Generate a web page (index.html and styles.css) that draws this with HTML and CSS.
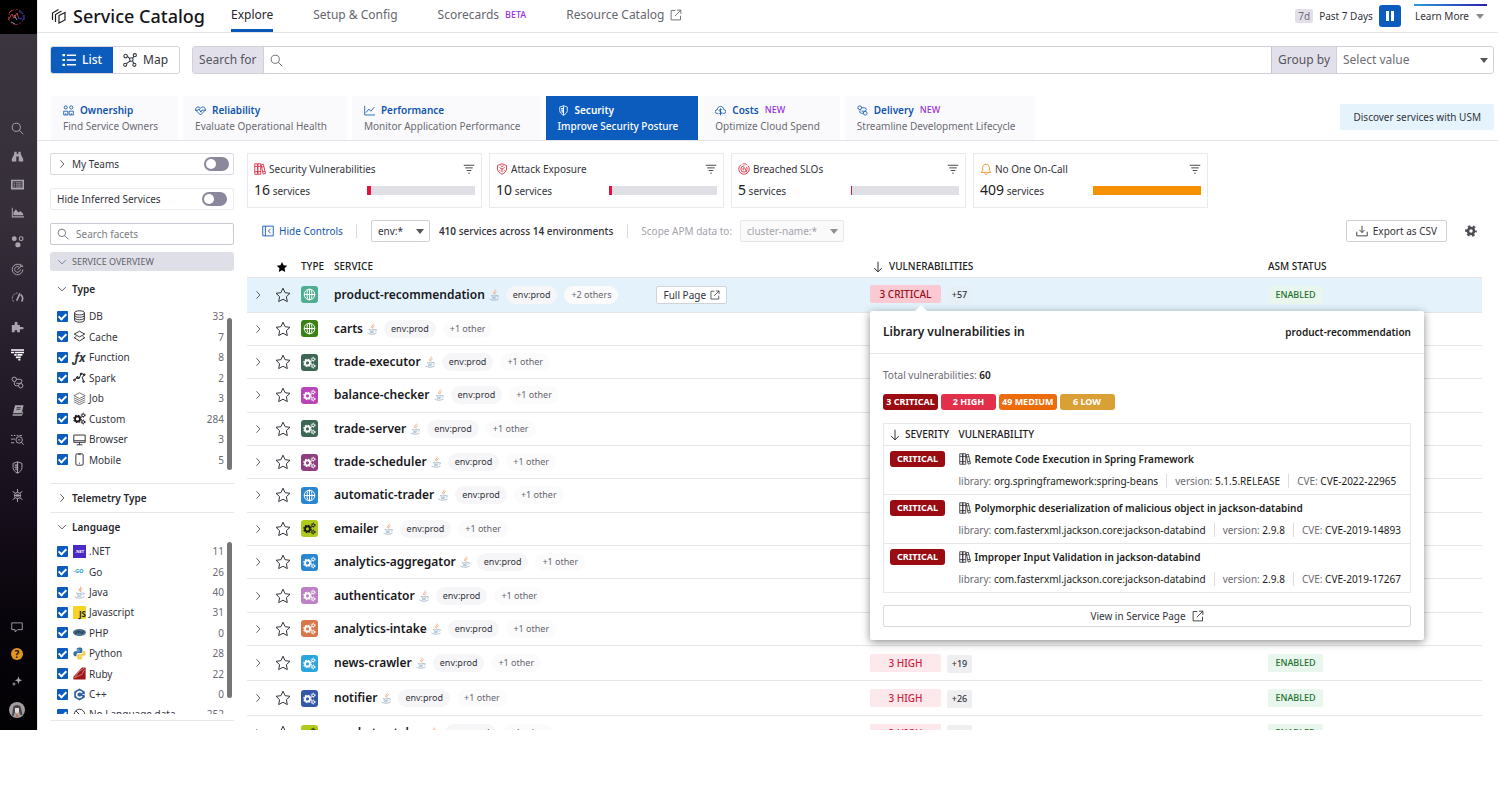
FILE: index.html
```html
<!doctype html>
<html lang="en">
<head>
	<meta charset="UTF-8">
	<title>Service Catalog</title>
	<link rel="stylesheet" href="styles.css">
</head>
<body>
	<!-- icon sprite -->
	<svg class="sprite" width="0" height="0" aria-hidden="true">
		<symbol id="i-search" viewBox="0 0 16 16"><circle cx="6.5" cy="6.5" r="5"/><path d="M10.2 10.2L15 15"/></symbol>
		<symbol id="i-right" viewBox="0 0 16 16"><path d="M5.5 2l5.5 6-5.5 6"/></symbol>
		<symbol id="i-down" viewBox="0 0 16 16"><path d="M2 5l6 6 6-6"/></symbol>
		<symbol id="i-star" viewBox="0 0 16 16"><path d="M8 1.2l2.1 4.5 4.9.6-3.6 3.4.9 4.9L8 12.2l-4.3 2.4.9-4.9L1 6.3l4.9-.6z"/></symbol>
		<symbol id="i-ext" viewBox="0 0 16 16"><path d="M7 2H1.5v12.500H14V9M9.500 1.500h5v5M14.500 1.500L6.500 9.500"/></symbol>
		<symbol id="i-filter" viewBox="0 0 16 16"><path d="M1 3h14M3 6.500h10M5 10h6M7 13.500h2"/></symbol>
		<symbol id="i-arrow" viewBox="0 0 16 16"><path d="M8 1v13.500M3 9.500l5 5 5-5"/></symbol>
		<symbol id="i-globe" viewBox="0 0 16 16"><circle cx="8" cy="8" r="6.500"/><ellipse cx="8" cy="8" rx="3" ry="6.500"/><path d="M8 1.500v13M1.500 8h13"/></symbol>
		<symbol id="i-gears" viewBox="0 0 16 16">
			<circle cx="5.500" cy="8.500" r="3" stroke-width="2.200"/><circle cx="5.500" cy="8.500" r="4.500" stroke-width="1.600" stroke-dasharray="2 1.534"/>
			<circle cx="12.500" cy="4" r="1.700" stroke-width="1.200"/><circle cx="12.500" cy="4" r="2.600" stroke-width=".9" stroke-dasharray="1.300 1.420"/>
			<circle cx="12.500" cy="12.300" r="1.700" stroke-width="1.200"/><circle cx="12.500" cy="12.300" r="2.600" stroke-width=".9" stroke-dasharray="1.300 1.420"/>
		</symbol>
		<symbol id="i-java" viewBox="0 0 16 16">
			<path d="M9.500.8c1.500 2-3.500 3.200-1.800 5.700M11.500 3.500C8.500 4.500 8.800 6 9.500 7.500" stroke="#f0a878" stroke-width="1.300"/>
			<path d="M4 8.500c2 .9 6 .9 8 0M4.800 10.500c2 .9 4.500.9 6.200 0M5.200 12.300c1.500.7 3.500.7 5 0M2 13.300c2.500 2.200 9.500 2.200 12 0M12.300 8.700c2.500-.5 2.200 2-.3 2.300" stroke="#9cb3c6" stroke-width="1.100"/>
		</symbol>
		<symbol id="i-books" viewBox="0 0 16 16"><path d="M1 1h4v14H1zM5 1h4v14H5zM1 4.500h8M1 11.500h8M9.500 2.500l3-.8L15.300 14l-3 .8zM10.300 5.500l3-.7M11.700 11.700l3-.7"/></symbol>
		<symbol id="i-shield" viewBox="0 0 16 16"><path d="M8 1l5.500 2v5c0 3-2.500 5.500-5.500 7-3-1.500-5.500-4-5.500-7V3zM8 1v14"/><path d="M8 3v10M4.500 5H8M4.500 7.500H8M5 10h3" stroke-width="1.600"/></symbol>
		<symbol id="i-link" viewBox="0 0 16 16"><circle cx="4" cy="4" r="2.700"/><circle cx="12" cy="12" r="2.700"/><path d="M6.700 4H11a2.500 2.500 0 0 1 0 5H6.500M9.300 12H6.500a2.500 2.500 0 0 1-1-4.800"/></symbol>
	</svg>

	<div class="app">
		<nav class="rail">
			<a href="#" class="logo" aria-label="Home">
				<svg viewBox="0 0 20 18"><circle cx="10" cy="9" r="7.500" stroke="#7a2826" stroke-dasharray="5 1.500 2 1"/><path d="M3 5l3-3M2 12l4-6 2 4 3-5 2 6" stroke="#c23a34"/><path d="M13 3l4 3M18 7v5M12 10l4 1" stroke="#2a2a9c" stroke-width="1.500"/><path d="M5 14l4 2M8 7l3 5" stroke="#8d9090"/></svg>
			</a>
			<ul class="rail_main">
				<li><a href="#" aria-label="Search"><svg class="ln"><use href="#i-search"/></svg></a></li>
				<li><a href="#" aria-label="Watchdog"><svg viewBox="0 0 16 16" class="fl"><path d="M4 2h3v3h2V2h3v3l3 6v3H9.500V8h-3v6H1v-3l3-6z"/></svg></a></li>
				<li><a href="#" aria-label="Dashboards"><svg viewBox="0 0 16 16" class="ln"><path d="M1 3h14v10H1z" stroke-width="2"/><path d="M3 6h2M6 6h7M3 8.500h2M6 8.500h7M3 11h2M6 11h7"/></svg></a></li>
				<li><a href="#" aria-label="Metrics"><svg viewBox="0 0 16 16" class="fl"><path d="M1 2h1.200v10.500H16V14H1zM3 11.500V8l3-4 3 4 2.500-2L15 9.500v2z"/></svg></a></li>
				<li><a href="#" aria-label="Infrastructure"><svg viewBox="0 0 16 16" class="fl"><circle cx="4" cy="4.500" r="3"/><circle cx="8.500" cy="12" r="3.200"/><circle cx="12.500" cy="4.500" r="2.300" fill="none" stroke="#a9a5ad" stroke-width="1.400"/></svg></a></li>
				<li><a href="#" aria-label="Monitors"><svg viewBox="0 0 16 16" class="ln"><path d="M11.500 2.500A6.500 6.500 0 1 0 14.500 8"/><path d="M10 5a3.500 3.500 0 1 0 1.500 3M8 8l6-5M12 1v3h3"/></svg></a></li>
				<li><a href="#" aria-label="Performance"><svg viewBox="0 0 16 16" class="ln"><path d="M3 13A6.500 6.500 0 0 1 8 2.500" stroke-dasharray="2.500 1.500"/><path d="M12 4.500a6.500 6.500 0 0 1 1 8.500M11 3L7 12" stroke-width="2"/></svg></a></li>
				<li><a href="#" aria-label="Integrations"><svg viewBox="0 0 16 16" class="fl"><path d="M1 6h3.500V3.500a1.800 1.800 0 0 1 3.500 0V6h3v2.500h3a1.500 1.500 0 0 1 0 3h-3V15H7.500v-2.500h-3V15H1z"/></svg></a></li>
				<li class="on"><a href="#" aria-label="Service Catalog"><svg viewBox="0 0 16 16" class="ln"><path d="M0 2.500h16M0 5.500h4M5 5.500h11M4 8.500h3M8 8.500h6M6 11.500h6M9 14.500h2.500" stroke-width="2"/></svg></a></li>
				<li><a href="#" aria-label="Delivery"><svg class="ln"><use href="#i-link"/></svg></a></li>
				<li><a href="#" aria-label="Notebooks"><svg viewBox="0 0 16 16" class="fl"><path d="M5 1.500h10.500l-2.500 10H2.500zM2 12.500h11l1.500-4 .5 1.500-1.500 4.500H2z"/><path d="M7 4.500h5M6.500 6.500h5" stroke="#241c28"/></svg></a></li>
				<li><a href="#" aria-label="Logs"><svg viewBox="0 0 16 16" class="ln"><path d="M0 3h2M3.500 3h2M7 3h2M10.500 3h3M0 7.500h5M0 12h4"/><circle cx="10" cy="8.500" r="4"/><path d="M13 11.500l2.500 3M8.500 8.500h3"/></svg></a></li>
				<li><a href="#" aria-label="Security"><svg class="ln"><use href="#i-shield"/></svg></a></li>
				<li><a href="#" aria-label="Threats"><svg viewBox="0 0 16 16" class="ln"><circle cx="8" cy="8" r="3.800"/><circle cx="8" cy="8" r="1.500"/><path d="M8 0v4M8 12v4M2 3l3 2M14 3l-3 2M2 13l3-2M14 13l-3-2M4 8h8"/></svg></a></li>
			</ul>
			<ul class="rail_foot">
				<li><a href="#" aria-label="Chat"><svg viewBox="0 0 16 16" class="ln"><path d="M1 2.500h14v9H9l-3.500 3v-3H1z"/></svg></a></li>
				<li><a href="#" class="help">?</a></li>
				<li><a href="#" aria-label="Bits AI"><svg viewBox="0 0 16 16" class="fl"><path d="M10 2l1.300 3.700L15 7l-3.700 1.300L10 12 8.700 8.300 5 7l3.700-1.300zM4 9l.8 2.200L7 12l-2.200.8L4 15l-.8-2.200L1 12l2.200-.8z"/></svg></a></li>
				<li><a href="#" aria-label="Account"><svg viewBox="0 0 16 16" class="avatar"><circle cx="8" cy="8" r="8" fill="#a39ea0"/><path d="M4 6c0-4 8-4 8 0l1.500 7h-2L10 10H6l-1.500 4H3z" fill="#4d4549"/><path d="M6 6h4v4l-2 2-2-2z" fill="#e3d9d8"/><path d="M8 10l-1 5h2z" fill="#b9683f"/></svg></a></li>
			</ul>
		</nav>

		<main class="main">
			<header class="top">
				<svg viewBox="0 0 16 16" class="brand"><path d="M1.500 12V5l6-3.500M4.500 14V6.500L10.500 3M8 7.500l6-3V12l-6 3z"/></svg>
				<h1>Service Catalog</h1>
				<nav class="top_nav">
					<a href="#" class="on">Explore</a>
					<a href="#">Setup &amp; Config</a>
					<a href="#">Scorecards <b class="new">BETA</b></a>
					<a href="#">Resource Catalog <svg class="ln"><use href="#i-ext"/></svg></a>
				</nav>
				<div class="time"><span class="time_tag">7d</span>Past 7 Days
					<button class="pause" aria-label="Pause"><i></i><i></i></button>
				</div>
				<button class="learn">Learn More <i class="caret"></i></button>
			</header>

			<div class="search_row">
				<div class="view">
					<button class="on"><svg viewBox="0 0 16 16" class="ln"><path d="M5.500 2.500H16M5.500 8H16M5.500 13.500H16" stroke-width="1.800"/><path d="M.5 2.500h3M.5 8h3M.5 13.500h3" stroke-width="2.500"/></svg>List</button>
					<button><svg viewBox="0 0 16 16" class="ln"><circle cx="3" cy="3.500" r="2"/><circle cx="13.500" cy="2.500" r="1.800"/><circle cx="9.500" cy="7.500" r="2"/><circle cx="2.500" cy="13.500" r="1.800"/><circle cx="13" cy="13.500" r="1.800"/><path d="M5 4l3 2.500M11 6l1.500-2M4 12c2-1 3-2 4-3M11 9l1.200 3"/></svg>Map</button>
				</div>
				<div class="search">
					<label for="q" class="tag">Search for</label>
					<svg class="ln"><use href="#i-search"/></svg>
					<input id="q" type="text">
					<label for="group" class="tag">Group by</label>
					<div class="sel"><select id="group"><option>Select value</option></select><i class="caret"></i></div>
				</div>
			</div>

			<div class="views">
				<a href="#"><b><svg viewBox="0 0 16 16" class="ln"><circle cx="4" cy="3.500" r="2.300"/><circle cx="12" cy="3.500" r="2.300"/><path d="M1 14.500V9h6v5.500zM9 14.500V9h6v5.500zM4 12v2.500M12 12v2.500"/></svg>Ownership</b>Find Service Owners</a>
				<a href="#"><b><svg viewBox="0 0 16 16" class="ln"><path d="M8 14.500L1.500 8C-.5 4.500 4 .5 8 4.500c4-4 8.500 0 6.500 3.500zM0 7.500h4.500L6 5.500l2.500 5 1.500-3h6"/></svg>Reliability</b>Evaluate Operational Health</a>
				<a href="#"><b><svg viewBox="0 0 16 16" class="ln"><path d="M1 1v13.500h15M3 11l4-5 3 3 5-6"/></svg>Performance</b>Monitor Application Performance</a>
				<a href="#" class="on"><b><svg class="ln"><use href="#i-shield"/></svg>Security</b>Improve Security Posture</a>
				<a href="#"><b><svg viewBox="0 0 16 16" class="ln"><path d="M5 12.500H3.500a3 3 0 0 1 0-6c0-6 9-6 9 0a3 3 0 0 1 0 6H11M8 5v10M10 7c-1-1-4-.8-4 1s4 1.500 4 3.300-3 2-4 .7"/></svg>Costs<em class="new">NEW</em></b>Optimize Cloud Spend</a>
				<a href="#"><b><svg class="ln"><use href="#i-link"/></svg>Delivery<em class="new">NEW</em></b>Streamline Development Lifecycle</a>
				<button class="usm">Discover services with USM</button>
			</div>

			<div class="content">
				<aside class="facets">
					<div class="box"><svg class="ln chev"><use href="#i-right"/></svg><label for="teams">My Teams</label><input type="checkbox" class="toggle" id="teams"></div>
					<div class="box light"><label for="inferred">Hide Inferred Services</label><input type="checkbox" class="toggle" id="inferred"></div>
					<div class="box find"><svg class="ln"><use href="#i-search"/></svg><input type="text" placeholder="Search facets" aria-label="Search facets"></div>
					<h2><svg class="ln chev"><use href="#i-down"/></svg>SERVICE OVERVIEW</h2>

					<section class="facet first">
						<h3><svg class="ln chev"><use href="#i-down"/></svg>Type</h3>
						<ul class="opts">
							<li><label><input type="checkbox" checked><svg viewBox="0 0 16 16" class="ln"><ellipse cx="8" cy="3.500" rx="6" ry="2.500"/><path d="M2 3.500v9c0 3.300 12 3.300 12 0v-9M2 6.500c0 3.300 12 3.300 12 0M2 9.500c0 3.300 12 3.300 12 0"/></svg>DB</label><span>33</span></li>
							<li><label><input type="checkbox" checked><svg viewBox="0 0 16 16" class="ln"><path d="M8 1.500L14.500 5 8 8.500 1.500 5zM4 8L1.500 9.500 8 13.500l6.500-4L12 8"/></svg>Cache</label><span>7</span></li>
							<li><label><input type="checkbox" checked><i class="fx">ƒx</i>Function</label><span>8</span></li>
							<li><label><input type="checkbox" checked><svg viewBox="0 0 16 16" class="ln dark"><path d="M1.500 11.500L5 8l2.500 1.500L10 3l4 1.500L11.500 8l1.500 5"/><circle cx="1.800" cy="11.200" r="1.200"/><circle cx="5.500" cy="8" r="1.200"/><circle cx="10" cy="3.500" r="1"/><circle cx="14" cy="4.500" r="1"/><circle cx="13" cy="13" r="1"/></svg>Spark</label><span>2</span></li>
							<li><label><input type="checkbox" checked><svg viewBox="0 0 16 16" class="ln thin"><path d="M8 1l7 3.500L8 8 1 4.500zM1 7l7 3.500L15 7M1 9.500L8 13l7-3.500M1 12l7 3.500 7-3.500"/></svg>Job</label><span>3</span></li>
							<li><label><input type="checkbox" checked><svg class="ln dark"><use href="#i-gears"/></svg>Custom</label><span>284</span></li>
							<li><label><input type="checkbox" checked><svg viewBox="0 0 16 16" class="ln"><path d="M1 2.500h14v9H1zM1 9.500h14M8 11.500v3M4.500 14.500h7"/></svg>Browser</label><span>3</span></li>
							<li><label><input type="checkbox" checked><svg viewBox="0 0 16 16" class="ln"><rect x="3.500" y="1" width="9" height="14" rx="1.500"/><path d="M6.500 1.500h3M7.300 12.500h1.400"/></svg>Mobile</label><span>5</span></li>
						</ul>
					</section>
					<section class="facet">
						<h3><svg class="ln chev"><use href="#i-right"/></svg>Telemetry Type</h3>
					</section>
					<section class="facet last">
						<h3><svg class="ln chev"><use href="#i-down"/></svg>Language</h3>
						<ul class="opts langs">
							<li><label><input type="checkbox" checked><i class="net">.NET</i>.NET</label><span>11</span></li>
							<li><label><input type="checkbox" checked><i class="go">-GO</i>Go</label><span>26</span></li>
							<li><label><input type="checkbox" checked><svg class="ln"><use href="#i-java"/></svg>Java</label><span>40</span></li>
							<li><label><input type="checkbox" checked><i class="js">JS</i>Javascript</label><span>31</span></li>
							<li><label><input type="checkbox" checked><svg viewBox="0 0 16 16"><ellipse cx="8" cy="8" rx="8" ry="4.200" fill="#4b6f8e"/><path d="M3 10l.8-3.500H5c1.500 0 1 2-.5 2h-1M7.200 5.500L6.500 9M7 7h2l-.4 2M10.500 10l.8-3.500h1.200c1.500 0 1 2-.5 2h-1" fill="none" stroke="#22384c" stroke-width=".9"/></svg>PHP</label><span>0</span></li>
							<li><label><input type="checkbox" checked><svg viewBox="0 0 16 16"><path d="M8 .5c-3 0-3.500 1-3.500 2.200V4.500h4v.7H3C1.200 5.200.5 6.500.5 8.300S1.200 11.500 3 11.500h1.300V9.600c0-1.400 1-2.100 2.200-2.100h3.300c1 0 1.700-.8 1.700-1.800v-3C11.500 1.200 10.500.5 8 .5z" fill="#2f6fa8"/><path d="M8 15.500c3 0 3.500-1 3.500-2.200v-1.800h-4v-.7H13c1.800 0 2.500-1.300 2.500-3S14.800 4.600 13 4.600h-.7v1.800c0 1.400-1 2.100-2.200 2.100H6.800C5.700 8.500 5 9.200 5 10.300v3c0 1.500.5 2.200 3 2.200z" fill="#f7cf45"/><circle cx="6.200" cy="2.700" r=".7" fill="#fff"/></svg>Python</label><span>28</span></li>
							<li><label><input type="checkbox" checked><svg viewBox="0 0 16 16"><path d="M11 .5h4.500v15H.5V12z" fill="#a0171b"/><path d="M2 13l5-7 7-5M2 13l9-4 3-6" stroke="#e9a5a4" stroke-width=".8" fill="none"/></svg>Ruby</label><span>22</span></li>
							<li><label><input type="checkbox" checked><svg viewBox="0 0 16 16"><path d="M8 .5l6.500 3.700v7.600L8 15.500l-6.500-3.700V4.200z" fill="#2d62a3"/><path d="M11 6a3.600 3.600 0 1 0 0 4" stroke="#fff" stroke-width="2" fill="none"/><path d="M11.500 8h3" stroke="#fff"/></svg>C++</label><span>0</span></li>
							<li><label><input type="checkbox" checked><svg viewBox="0 0 16 16" class="ln"><circle cx="8" cy="8" r="6.500"/><path d="M3.500 3.500l9 9"/></svg>No Language data</label><span>252</span></li>
						</ul>
					</section>
				</aside>

				<div class="results">
					<div class="cards">
						<div class="card">
							<h4><svg class="ln red"><use href="#i-books"/></svg>Security Vulnerabilities</h4><svg class="ln flt"><use href="#i-filter"/></svg>
							<p><b>16</b> services</p><div class="bar"><i style="width:4%"></i></div>
						</div>
						<div class="card">
							<h4><svg viewBox="0 0 16 16" class="ln red"><path d="M8 1l6 2.300V8c0 3-2.500 5.500-6 7-3.500-1.500-6-4-6-7V3.300zM4.500 6L8 8l3.500-2M8 8v4M6 3.500l2 1.300 2-1.300M4.500 9.500L6 11M11.500 9.500L10 11"/></svg>Attack Exposure</h4><svg class="ln flt"><use href="#i-filter"/></svg>
							<p><b>10</b> services</p><div class="bar"><i style="width:3%"></i></div>
						</div>
						<div class="card">
							<h4><svg viewBox="0 0 16 16" class="ln red"><circle cx="8" cy="8" r="7" stroke-dasharray="28 2 6 2"/><circle cx="8" cy="8" r="4.200" stroke-dasharray="20 3"/><path d="M8 9.500a1.600 1.600 0 1 1 1.600-1.600c0 3 2.400 2.500 2.600 5"/></svg>Breached SLOs</h4><svg class="ln flt"><use href="#i-filter"/></svg>
							<p><b>5</b> services</p><div class="bar"><i style="width:1%"></i></div>
						</div>
						<div class="card">
							<h4><svg viewBox="0 0 16 16" class="ln orange"><path d="M1.500 12.500h13L12.500 10V6.500c0-6.500-9-6.500-9 0V10zM6 14c.5 1.500 3.500 1.500 4 0"/></svg>No One On-Call</h4><svg class="ln flt"><use href="#i-filter"/></svg>
							<p><b>409</b> services</p><div class="bar warn"><i style="width:100%"></i></div>
						</div>
					</div>

					<div class="controls">
						<a href="#" class="hide"><svg viewBox="0 0 16 16" class="ln"><path d="M1 1.500h14v13H1zM4.500 1.500v13M11.500 5L8.500 8l3 3"/></svg>Hide Controls</a>
						<div class="sel env"><select aria-label="Environment"><option>env:*</option></select><i class="caret"></i></div>
						<span class="count"><b>410</b> services across <b>14</b> environments</span>
						<label for="cluster" class="scope">Scope APM data to:</label>
						<div class="sel cluster"><select id="cluster" disabled><option>cluster-name:*</option></select><i class="caret"></i></div>
						<button class="export"><svg viewBox="0 0 16 16" class="ln"><path d="M1 9v5.500h14V9M8 1v9M4.500 6.500L8 10l3.500-3.500"/></svg>Export as CSV</button>
						<button class="gear" aria-label="Settings"><svg viewBox="0 0 16 16"><circle cx="8" cy="8" r="4" stroke="#4c4c55" stroke-width="3.400" fill="none"/><circle cx="8" cy="8" r="6.500" stroke="#4c4c55" stroke-width="2.600" stroke-dasharray="3.400 3.407" stroke-dashoffset="1.700" fill="none"/></svg></button>
					</div>

					<table class="services">
						<thead>
							<tr><th class="c_open"></th><th class="c_star"><svg class="full"><use href="#i-star"/></svg></th><th class="c_type">TYPE</th><th>SERVICE</th><th class="c_vuln"><svg class="ln"><use href="#i-arrow"/></svg>VULNERABILITIES</th><th class="c_asm">ASM STATUS</th></tr>
						</thead>
						<tbody>
							<tr class="on">
								<td><button aria-label="Expand"><svg class="ln chev"><use href="#i-right"/></svg></button></td>
								<td><button aria-label="Favorite"><svg class="ln star"><use href="#i-star"/></svg></button></td>
								<td><span class="type teal"><svg class="ln"><use href="#i-globe"/></svg></span></td>
								<td><div class="svc"><a href="#">product-recommendation</a><svg class="ln"><use href="#i-java"/></svg><span>env:prod</span><span class="more">+2 others</span><button class="full_page">Full Page <svg class="ln"><use href="#i-ext"/></svg></button></div></td>
								<td class="vuln"><span class="sev crit">3 CRITICAL</span><span class="plus">+57</span>
									<div class="pop">
										<header><h3>Library vulnerabilities in</h3><b>product-recommendation</b></header>
										<p>Total vulnerabilities: <b>60</b></p>
										<div class="badges"><span class="badge b_crit">3 CRITICAL</span><span class="badge b_high">2 HIGH</span><span class="badge b_med">49 MEDIUM</span><span class="badge b_low">6 LOW</span></div>
										<table class="libs">
											<thead><tr><th class="c_sev"><svg class="ln"><use href="#i-arrow"/></svg>SEVERITY</th><th>VULNERABILITY</th></tr></thead>
											<tbody>
												<tr><td><span class="badge b_crit">CRITICAL</span></td><td><h5><svg class="ln"><use href="#i-books"/></svg>Remote Code Execution in Spring Framework</h5><div class="meta"><span>library: <b>org.springframework:spring-beans</b></span><span>version: <b>5.1.5.RELEASE</b></span><span>CVE: <b>CVE-2022-22965</b></span></div></td></tr>
												<tr><td><span class="badge b_crit">CRITICAL</span></td><td><h5><svg class="ln"><use href="#i-books"/></svg>Polymorphic deserialization of malicious object in jackson-databind</h5><div class="meta"><span>library: <b>com.fasterxml.jackson.core:jackson-databind</b></span><span>version: <b>2.9.8</b></span><span>CVE: <b>CVE-2019-14893</b></span></div></td></tr>
												<tr><td><span class="badge b_crit">CRITICAL</span></td><td><h5><svg class="ln"><use href="#i-books"/></svg>Improper Input Validation in jackson-databind</h5><div class="meta"><span>library: <b>com.fasterxml.jackson.core:jackson-databind</b></span><span>version: <b>2.9.8</b></span><span>CVE: <b>CVE-2019-17267</b></span></div></td></tr>
											</tbody>
										</table>
										<button class="view_page">View in Service Page <svg class="ln"><use href="#i-ext"/></svg></button>
									</div>
								</td>
								<td><span class="asm">ENABLED</span></td>
							</tr>
							<tr>
								<td><button aria-label="Expand"><svg class="ln chev"><use href="#i-right"/></svg></button></td>
								<td><button aria-label="Favorite"><svg class="ln star"><use href="#i-star"/></svg></button></td>
								<td><span class="type green"><svg class="ln"><use href="#i-globe"/></svg></span></td>
								<td><div class="svc"><a href="#">carts</a><svg class="ln"><use href="#i-java"/></svg><span>env:prod</span><span class="more">+1 other</span></div></td>
								<td></td><td></td>
							</tr>
							<tr>
								<td><button aria-label="Expand"><svg class="ln chev"><use href="#i-right"/></svg></button></td>
								<td><button aria-label="Favorite"><svg class="ln star"><use href="#i-star"/></svg></button></td>
								<td><span class="type pine"><svg class="ln"><use href="#i-gears"/></svg></span></td>
								<td><div class="svc"><a href="#">trade-executor</a><svg class="ln"><use href="#i-java"/></svg><span>env:prod</span><span class="more">+1 other</span></div></td>
								<td></td><td></td>
							</tr>
							<tr>
								<td><button aria-label="Expand"><svg class="ln chev"><use href="#i-right"/></svg></button></td>
								<td><button aria-label="Favorite"><svg class="ln star"><use href="#i-star"/></svg></button></td>
								<td><span class="type magenta"><svg class="ln"><use href="#i-gears"/></svg></span></td>
								<td><div class="svc"><a href="#">balance-checker</a><svg class="ln"><use href="#i-java"/></svg><span>env:prod</span><span class="more">+1 other</span></div></td>
								<td></td><td></td>
							</tr>
							<tr>
								<td><button aria-label="Expand"><svg class="ln chev"><use href="#i-right"/></svg></button></td>
								<td><button aria-label="Favorite"><svg class="ln star"><use href="#i-star"/></svg></button></td>
								<td><span class="type pine"><svg class="ln"><use href="#i-gears"/></svg></span></td>
								<td><div class="svc"><a href="#">trade-server</a><svg class="ln"><use href="#i-java"/></svg><span>env:prod</span><span class="more">+1 other</span></div></td>
								<td></td><td></td>
							</tr>
							<tr>
								<td><button aria-label="Expand"><svg class="ln chev"><use href="#i-right"/></svg></button></td>
								<td><button aria-label="Favorite"><svg class="ln star"><use href="#i-star"/></svg></button></td>
								<td><span class="type plum"><svg class="ln"><use href="#i-gears"/></svg></span></td>
								<td><div class="svc"><a href="#">trade-scheduler</a><svg class="ln"><use href="#i-java"/></svg><span>env:prod</span><span class="more">+1 other</span></div></td>
								<td></td><td></td>
							</tr>
							<tr>
								<td><button aria-label="Expand"><svg class="ln chev"><use href="#i-right"/></svg></button></td>
								<td><button aria-label="Favorite"><svg class="ln star"><use href="#i-star"/></svg></button></td>
								<td><span class="type blue"><svg class="ln"><use href="#i-globe"/></svg></span></td>
								<td><div class="svc"><a href="#">automatic-trader</a><svg class="ln"><use href="#i-java"/></svg><span>env:prod</span><span class="more">+1 other</span></div></td>
								<td></td><td></td>
							</tr>
							<tr>
								<td><button aria-label="Expand"><svg class="ln chev"><use href="#i-right"/></svg></button></td>
								<td><button aria-label="Favorite"><svg class="ln star"><use href="#i-star"/></svg></button></td>
								<td><span class="type lime"><svg class="ln"><use href="#i-gears"/></svg></span></td>
								<td><div class="svc"><a href="#">emailer</a><svg class="ln"><use href="#i-java"/></svg><span>env:prod</span><span class="more">+1 other</span></div></td>
								<td></td><td></td>
							</tr>
							<tr>
								<td><button aria-label="Expand"><svg class="ln chev"><use href="#i-right"/></svg></button></td>
								<td><button aria-label="Favorite"><svg class="ln star"><use href="#i-star"/></svg></button></td>
								<td><span class="type blue"><svg class="ln"><use href="#i-gears"/></svg></span></td>
								<td><div class="svc"><a href="#">analytics-aggregator</a><svg class="ln"><use href="#i-java"/></svg><span>env:prod</span><span class="more">+1 other</span></div></td>
								<td></td><td></td>
							</tr>
							<tr>
								<td><button aria-label="Expand"><svg class="ln chev"><use href="#i-right"/></svg></button></td>
								<td><button aria-label="Favorite"><svg class="ln star"><use href="#i-star"/></svg></button></td>
								<td><span class="type lilac"><svg class="ln"><use href="#i-gears"/></svg></span></td>
								<td><div class="svc"><a href="#">authenticator</a><svg class="ln"><use href="#i-java"/></svg><span>env:prod</span><span class="more">+1 other</span></div></td>
								<td></td><td></td>
							</tr>
							<tr>
								<td><button aria-label="Expand"><svg class="ln chev"><use href="#i-right"/></svg></button></td>
								<td><button aria-label="Favorite"><svg class="ln star"><use href="#i-star"/></svg></button></td>
								<td><span class="type rust"><svg class="ln"><use href="#i-gears"/></svg></span></td>
								<td><div class="svc"><a href="#">analytics-intake</a><svg class="ln"><use href="#i-java"/></svg><span>env:prod</span><span class="more">+1 other</span></div></td>
								<td></td><td></td>
							</tr>
							<tr>
								<td><button aria-label="Expand"><svg class="ln chev"><use href="#i-right"/></svg></button></td>
								<td><button aria-label="Favorite"><svg class="ln star"><use href="#i-star"/></svg></button></td>
								<td><span class="type sky"><svg class="ln"><use href="#i-gears"/></svg></span></td>
								<td><div class="svc"><a href="#">news-crawler</a><svg class="ln"><use href="#i-java"/></svg><span>env:prod</span><span class="more">+1 other</span></div></td>
								<td><span class="sev">3 HIGH</span><span class="plus">+19</span></td>
								<td><span class="asm">ENABLED</span></td>
							</tr>
							<tr>
								<td><button aria-label="Expand"><svg class="ln chev"><use href="#i-right"/></svg></button></td>
								<td><button aria-label="Favorite"><svg class="ln star"><use href="#i-star"/></svg></button></td>
								<td><span class="type navy"><svg class="ln"><use href="#i-gears"/></svg></span></td>
								<td><div class="svc"><a href="#">notifier</a><svg class="ln"><use href="#i-java"/></svg><span>env:prod</span><span class="more">+1 other</span></div></td>
								<td><span class="sev">3 HIGH</span><span class="plus">+26</span></td>
								<td><span class="asm">ENABLED</span></td>
							</tr>
							<tr>
								<td><button aria-label="Expand"><svg class="ln chev"><use href="#i-right"/></svg></button></td>
								<td><button aria-label="Favorite"><svg class="ln star"><use href="#i-star"/></svg></button></td>
								<td><span class="type lime"><svg class="ln"><use href="#i-gears"/></svg></span></td>
								<td><div class="svc"><a href="#">market-catalog</a><svg class="ln"><use href="#i-java"/></svg><span>env:prod</span><span class="more">+1 other</span></div></td>
								<td><span class="sev">3 HIGH</span><span class="plus">+18</span></td>
								<td><span class="asm">ENABLED</span></td>
							</tr>
						</tbody>
					</table>
				</div>
			</div>
		</main>
	</div>
</body>
</html>
```
FILE: styles.css
```css
*{
	margin: 0;
	padding: 0;
	box-sizing: border-box;
	list-style-type: none;
}
body{
	background: #fff;
	font: 10px/14px "Noto Sans", "Open Sans", sans-serif;
	color: #33333b;
	height: 100vh;
	padding-bottom: 70px;
	overflow: hidden;
}
button, input, select{
	font: inherit;
	color: inherit;
	background: none;
	border: 0;
}
a{
	color: inherit;
	text-decoration: none;
}
h1, h2, h3, h4, h5{
	font-size: 10px;
	font-weight: 500;
}
svg{
	width: 12px;
	height: 12px;
	display: block;
	flex: none;
}
.sprite{
	position: absolute;
	width: 0;
	height: 0;
}
.ln{
	fill: none;
	stroke: currentColor;
	stroke-width: 1.2;
}
.fl{
	fill: currentColor;
}
.caret{
	border: 4px solid transparent;
	border-top: 5px solid #55555c;
	border-bottom: 0;
}
.new{
	color: #962fdb;
	font-size: 9px;
	font-style: normal;
	font-weight: 500;
}
.app{
	display: flex;
	height: 100%;
	overflow: hidden;
}

/* left rail */
.rail{
	width: 37px;
	flex: none;
	display: flex;
	flex-direction: column;
	background: linear-gradient(#3b363f 0, #362f3a 30%, #251d2a 50%, #1b1220 65%, #08040b 85%, #020103);
	color: #a9a5ad;
}
.logo{
	height: 34px;
	padding-right: 5px;
	background: #000;
	display: flex;
	align-items: center;
	justify-content: center;
}
.logo svg{
	width: 20px;
	height: 18px;
	fill: none;
}
.rail ul{
	display: grid;
	padding-right: 3px;
}
.rail_main{
	margin-top: 80px;
	height: 396px;
}
.rail_main svg{
	width: 13px;
	height: 13px;
}
.rail_foot{
	margin-top: auto;
	margin-bottom: 4px;
	height: 113px;
}
.rail li, .rail li a{
	display: flex;
	align-items: center;
	justify-content: center;
}
.rail .on{
	color: #fff;
}
.rail .help{
	width: 12px;
	height: 12px;
	border-radius: 50%;
	background: #e3951f;
	color: #1b1220;
	font-weight: 700;
}
.rail .avatar{
	width: 16px;
	height: 16px;
}

/* header */
.main{
	flex: 1;
	min-width: 0;
	border-left: 1px solid #e8e8ec;
}
.top{
	height: 33px;
	border-bottom: 1px solid #e3e3e7;
	padding: 0 11px 0 13px;
	display: flex;
	align-items: center;
}
.brand{
	width: 16px;
	height: 16px;
	fill: none;
	stroke: #1c1c20;
	stroke-width: 1.2;
}
.top h1{
	font-size: 18px;
	line-height: 24px;
	margin-left: 6px;
	color: #15151a;
}
.top_nav{
	display: flex;
	gap: 40px;
	margin-left: 26px;
	font-size: 12px;
	line-height: 29px;
	color: #66666e;
}
.top_nav a{
	border-bottom: 3px solid transparent;
	display: flex;
	align-items: center;
	gap: 6px;
}
.top_nav .on{
	color: #26262c;
	border-color: #0b57b5;
}
.time{
	margin-left: auto;
	display: flex;
	align-items: center;
	gap: 6px;
}
.time_tag{
	background: #e2dfe9;
	border-radius: 2px;
	padding: 0 3px;
	color: #6d6a78;
}
.pause{
	width: 22px;
	height: 22px;
	border-radius: 3px;
	background: #0b5cbd;
	display: flex;
	align-items: center;
	justify-content: center;
	gap: 2px;
}
.pause i{
	width: 3px;
	height: 10px;
	background: #fff;
}
.learn{
	margin-left: 13px;
	height: 24px;
	display: flex;
	align-items: center;
	gap: 7px;
	border-top: 2px solid;
	border-image: linear-gradient(90deg, #2b9ddb, #2a1fae) 1;
	padding: 0 3px 2px 1px;
}
.learn .caret{
	border-top-color: #8a8a92;
}

/* search */
.search_row{
	display: flex;
	gap: 12px;
	padding: 13px 4px 0 12px;
	font-size: 12px;
}
.view{
	display: flex;
	height: 28px;
	border: 1px solid #d4d4da;
	border-radius: 3px;
	overflow: hidden;
}
.view button{
	display: flex;
	align-items: center;
	gap: 6px;
	padding: 0 11px 0 10px;
}
.view svg{
	width: 14px;
	height: 14px;
}
.view .on{
	background: #0b5cbd;
	color: #fff;
	font-weight: 500;
	padding-left: 11px;
}
.search{
	flex: 1;
	height: 28px;
	display: flex;
	align-items: center;
	border: 1px solid #d0d0d6;
	border-radius: 3px;
	color: #6d6d75;
}
.search .tag{
	align-self: stretch;
	line-height: 26px;
	padding: 0 6px;
	background: #e2e0ea;
	border-right: 1px solid #d0d0d6;
	color: #55555e;
}
.search > input + .tag{
	border-left: 1px solid #c4c4cc;
}
.search > svg{
	width: 13px;
	height: 13px;
	margin: 0 6px;
}
.search > input{
	flex: 1;
	outline: 0;
}
.sel{
	position: relative;
	display: flex;
	align-items: center;
}
.sel select{
	appearance: none;
	width: 100%;
	height: 100%;
	padding: 0 22px 0 6px;
	opacity: 1;
}
.sel .caret{
	position: absolute;
	right: 5px;
	pointer-events: none;
}
.search .sel{
	width: 156px;
	height: 26px;
}

/* saved views */
.views{
	display: flex;
	margin-top: 22px;
	padding: 0 4px 0 13px;
	gap: 5px;
	border-bottom: 1px solid #e3e3e7;
	color: #6b6b73;
}
.views a{
	height: 44px;
	padding: 6px 20px 0 12px;
	line-height: 16px;
	background: #fafafc;
	white-space: nowrap;
}
.views a b{
	display: flex;
	align-items: center;
	gap: 6px;
	color: #0f55ad;
	font-weight: 600;
}
.views svg{
	width: 11px;
	height: 11px;
}
.views .on, .views .on b{
	background: #0b5cbd;
	color: #fff;
	font-weight: 500;
}
.views .on b{
	font-weight: 600;
}
.usm{
	margin-left: auto;
	margin-bottom: 3px;
	align-self: center;
	height: 26px;
	padding: 0 13px;
	background: #e5f4fc;
	border-radius: 2px;
	color: #33333b;
}

/* facets */
.content{
	display: flex;
	gap: 13px;
	padding: 12px 16px 0 12px;
}
.facets{
	width: 184px;
	flex: none;
}
.box{
	height: 22px;
	border: 1px solid #d8d8de;
	border-radius: 2px;
	display: flex;
	align-items: center;
	padding: 0 4px 0 6px;
	margin-bottom: 13px;
}
.box label{
	flex: 1;
}
.box.light{
	border-color: #ececf0;
	padding-right: 6px;
}
.chev{
	width: 10px;
	height: 10px;
}
.box .chev{
	margin-right: 5px;
}
.toggle{
	appearance: none;
	width: 25px;
	height: 14px;
	border-radius: 7px;
	background: #8b879c;
	padding: 2px;
}
.toggle::before{
	content: "";
	display: block;
	width: 10px;
	height: 10px;
	border-radius: 50%;
	background: #fff;
}
.box.find{
	gap: 7px;
	margin-bottom: 7px;
	border-color: #c9c9d4;
	color: #6d6d75;
}
.find input{
	width: 100%;
	outline: 0;
}
.find input::placeholder{
	color: #7b7b83;
}
.facets h2{
	display: flex;
	align-items: center;
	gap: 5px;
	height: 19px;
	padding-left: 7px;
	background: #dfdfe8;
	border-radius: 3px;
	font-size: 9px;
	font-weight: 400;
	color: #5f5f69;
}
.facet{
	border-bottom: 1px solid #e8e8ec;
	padding-left: 7px;
}
.facet h3{
	height: 28px;
	display: flex;
	align-items: center;
	gap: 5px;
	font-weight: 600;
	color: #26262c;
}
.first h3{
	margin: 4px 0 3px;
}
.first{
	padding-bottom: 13px;
}
.last{
	padding-bottom: 6px;
}
.opts{
	position: relative;
	display: grid;
	height: 164px;
	overflow: hidden;
}
.opts::after{
	content: "";
	position: absolute;
	right: 2px;
	top: 12px;
	bottom: 0;
	width: 5px;
	border-radius: 3px;
	background: #75757a;
}
.langs{
	height: 173px;
	grid-template-rows: repeat(9, 11.8%);
}
.langs::after{
	top: 1px;
	bottom: 16px;
}
.opts li, .opts label{
	display: flex;
	align-items: center;
}
.opts label{
	flex: 1;
}
.opts span{
	margin-right: 10px;
	color: #6b6b73;
}
.opts input{
	appearance: none;
	width: 11px;
	height: 11px;
	border-radius: 1px;
	background: #0b5cbd;
	margin-right: 5px;
	display: flex;
	justify-content: center;
}
.opts input::before{
	content: "";
	width: 3px;
	height: 6px;
	margin-top: 1px;
	border: solid #fff;
	border-width: 0 2px 2px 0;
	transform: rotate(45deg);
	box-sizing: content-box;
}
.opts svg, .opts label i{
	width: 13px;
	height: 13px;
	margin-right: 3px;
}
.opts label i{
	font-style: normal;
	font-weight: 700;
	line-height: 13px;
}
.opts .fx{
	font-style: italic;
	font-size: 12px;
}
.opts .thin{
	stroke-width: .8;
}
.dark{
	color: #18181c;
}
.opts .net{
	background: #4a2bc5;
	color: #fff;
	font-size: 4px;
	text-align: center;
}
.opts .go{
	color: #1fa3cf;
	font-size: 6px;
	font-style: italic;
}
.opts .js{
	background: #f2d526;
	color: #1c1c1c;
	font-size: 8px;
	line-height: 16px;
	text-align: right;
}

/* cards */
.results{
	flex: 1;
	min-width: 0;
}
.cards{
	display: grid;
	grid-template-columns: repeat(4, 235px);
	gap: 7px;
}
.card{
	height: 55px;
	border: 1px solid #e9e9ee;
	display: grid;
	grid-template-columns: minmax(0, 1fr) 108px;
	grid-template-rows: 21px 22px;
	align-items: center;
	padding: 4px 6px;
}
.card h4{
	display: flex;
	align-items: center;
	gap: 3px;
	font-weight: 400;
	white-space: nowrap;
}
.card .flt{
	justify-self: end;
}
.card p b{
	font-size: 14px;
	font-weight: 400;
	color: #1c1c20;
}
.red{
	color: #dd3147;
}
.orange{
	color: #ef9021;
}
.bar{
	height: 9px;
	background: #e0dfe5;
}
.bar i{
	display: block;
	height: 9px;
	background: #e4113c;
}
.bar.warn i{
	background: #f59000;
}

/* controls */
.controls{
	display: flex;
	align-items: center;
	height: 22px;
	margin-top: 12px;
	padding: 0 5px 0 15px;
}
.hide{
	display: flex;
	align-items: center;
	gap: 5px;
	color: #1358b0;
	padding-right: 13px;
	margin-right: 14px;
	border-right: 1px solid #d8d8de;
}
.controls .sel{
	height: 22px;
	border: 1px solid #d0d0d8;
	border-radius: 2px;
}
.env{
	width: 59px;
}
.count{
	margin-left: 9px;
	font-weight: 500;
}
.count b{
	font-weight: 600;
}
.scope{
	margin-left: 14px;
	padding-left: 13px;
	border-left: 1px solid #d8d8de;
	color: #a3a3ab;
}
.controls .cluster{
	width: 104px;
	margin-left: 8px;
	border-color: #e6e6ea;
	background: #fafafa;
	color: #a3a3ab;
}
.cluster .caret{
	border-top-color: #8f8f96;
}
.export{
	margin-left: auto;
	height: 22px;
	padding: 0 9px;
	border: 1px solid #d0d0d8;
	border-radius: 2px;
	display: flex;
	align-items: center;
	gap: 5px;
}
.gear{
	margin-left: 18px;
}

/* service table */
.services{
	width: 100%;
	height: 495px;
	margin-top: 13px;
	border-collapse: collapse;
	table-layout: fixed;
	text-align: left;
}
th{
	height: 22px;
	font-weight: 500;
	font-size: 10px;
	color: #1c1c20;
}
th svg{
	display: inline-block;
	vertical-align: middle;
}
.c_open, .c_star{
	width: 24px;
}
.c_star{
	padding-left: 5px;
}
.c_type{
	width: 39px;
	padding-left: 6px;
}
.services > thead .c_vuln{
	width: 398px;
	padding-left: 2px;
}
.c_vuln svg{
	margin-right: 5px;
}
.c_asm{
	width: 214px;
}
.services > tbody > tr{
	border-top: 1px solid #e6e6ea;
}
.services > tbody > .on{
	background: #e4f3fb;
}
.services td button{
	display: flex;
}
.services td:nth-child(1) > button{
	margin-left: 6px;
}
.services td:nth-child(2) > button{
	margin-left: 4px;
}
.star{
	width: 16px;
	height: 16px;
	stroke-width: 1;
}
.type{
	width: 17px;
	height: 17px;
	margin-left: 6px;
	border-radius: 3px;
	display: flex;
	align-items: center;
	justify-content: center;
	color: #fff;
}
.type svg{
	width: 13px;
	height: 13px;
}
.teal{ background: #4fae92; }
.green{ background: #3a8216; }
.pine{ background: #3d6654; }
.magenta{ background: #b845b8; }
.plum{ background: #8f3f80; }
.blue{ background: #2a86cf; }
.lime{ background: #b0c91c; color: #18181c; }
.lilac{ background: #bd82c5; }
.rust{ background: #d8784a; }
.sky{ background: #2ba5dc; }
.navy{ background: #3458a8; }
.svc{
	display: flex;
	align-items: center;
	gap: 6px;
	white-space: nowrap;
}
.svc > a{
	font-size: 12px;
	font-weight: 600;
	color: #18181c;
	margin-right: -3px;
}
.svc > span{
	height: 18px;
	line-height: 18px;
	padding: 0 7px;
	border-radius: 9px;
	background: #f6f6f8;
	font-size: 9px;
}
.svc > .more{
	margin-left: 1px;
	background: #fbfbfc;
	color: #66666e;
}
.svc .full_page{
	height: 18px;
	margin-left: 32px;
	padding: 0 6px;
	align-items: center;
	gap: 4px;
	background: #fff;
	border: 1px solid #cfd3da;
	border-radius: 2px;
}
.full_page svg{
	width: 10px;
	height: 10px;
}
.sev, .plus, .asm{
	display: inline-block;
	height: 18px;
	line-height: 18px;
	border-radius: 2px;
	font-size: 9px;
	font-weight: 500;
	text-align: center;
}
.sev{
	width: 71px;
	background: #fde8ec;
	color: #cf1d40;
	margin-right: 6px;
	font-size: 10px;
}
.sev.crit{
	background: #fbc9d2;
	color: #94121a;
}
.plus{
	width: 25px;
	background: #efeff1;
}
.on .plus{
	background: #e6eff6;
}
.asm{
	width: 55px;
	background: #e9f6ee;
	color: #1d7030;
}
.vuln{
	position: relative;
}

/* vulnerabilities popover */
.pop{
	position: absolute;
	top: 33px;
	left: 0;
	z-index: 10;
	width: 554px;
	padding: 0 13px 13px;
	background: #fff;
	border-radius: 2px;
	box-shadow: 0 2px 8px rgba(0, 0, 0, .45);
}
.pop::before{
	content: "";
	position: absolute;
	left: 45px;
	top: -6px;
	border: 6px solid transparent;
	border-top: 0;
	border-bottom-color: #fff;
}
.pop header{
	display: flex;
	align-items: center;
	justify-content: space-between;
	height: 43px;
	margin: 0 -13px;
	padding: 0 13px;
	border-bottom: 1px solid #e6e6ea;
	color: #1c1c20;
}
.pop header h3{
	font-size: 12px;
	font-weight: 600;
}
.pop b{
	font-weight: 600;
	color: #1c1c20;
}
.pop p{
	margin: 14px 0 12px;
	color: #6b6b73;
}
.badges{
	display: flex;
	gap: 3px;
	margin-bottom: 13px;
}
.badge{
	display: inline-block;
	min-width: 55px;
	height: 16px;
	line-height: 16px;
	padding: 0 3px;
	border-radius: 3px;
	font-size: 9px;
	font-weight: 700;
	text-align: center;
	color: #fff;
}
.b_crit{ background: #9a0b12; }
.b_high{ background: #e22f4a; }
.b_med{ background: #ec6c0c; }
.b_low{ background: #dba035; }
.libs{
	width: 100%;
	border: 1px solid #e8e8ec;
	border-collapse: collapse;
}
.c_sev{
	width: 75px;
	padding-left: 5px;
	white-space: nowrap;
}
.c_sev svg{
	margin-right: 4px;
}
.libs td{
	height: 49px;
	border-top: 1px solid #e6e6ea;
	vertical-align: top;
	padding-top: 6px;
}
.libs td:first-child{
	padding-left: 6px;
	padding-top: 5px;
}
.libs h5{
	display: flex;
	align-items: center;
	gap: 4px;
	font-weight: 600;
	color: #1c1c20;
}
.libs h5 svg{
	stroke-width: 1;
}
.meta{
	display: flex;
	margin-top: 8px;
	white-space: nowrap;
	color: #6b6b73;
}
.meta span + span{
	margin-left: 8px;
	padding-left: 8px;
	border-left: 1px solid #dcdce2;
}
.meta b{
	font-weight: 400;
}
.pop .view_page{
	width: 100%;
	height: 22px;
	margin-top: 12px;
	border: 1px solid #d8d8de;
	border-radius: 2px;
	align-items: center;
	justify-content: center;
	gap: 6px;
}
```
